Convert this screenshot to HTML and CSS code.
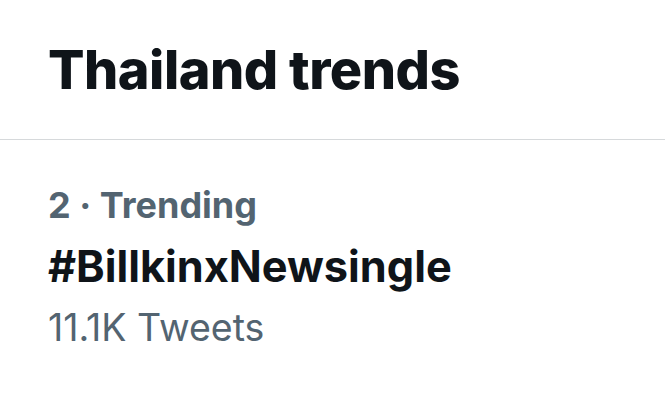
FILE: index.html
```html
<!DOCTYPE html>
<html>
<head>
<meta charset="utf-8">
<link rel="stylesheet" href="styles.css">
</head>
<body>
<div class="panel">
  <header class="header">
    <h1 class="title">Thailand trends</h1>
  </header>
  <div class="trend">
    <div class="meta">2 · Trending</div>
    <div class="tag">#BillkinxNewsingle</div>
    <div class="count">11.1K Tweets</div>
  </div>
</div>
</body>
</html>
```

FILE: styles.css
```css
html, body {
  margin: 0;
  padding: 0;
  background: #ffffff;
}
body {
  font-family: Inter, "Noto Sans", "Liberation Sans", sans-serif;
  width: 665px;
  height: 403px;
  overflow: hidden;
}
.header {
  padding: 37px 48px 0 48px;
  height: 140px;
  box-sizing: border-box;
  border-bottom: 1px solid #d6d9db;
}
.title {
  margin: 0;
  font-size: 54px;
  font-weight: 800;
  line-height: 66px;
  color: #0f1419;
  letter-spacing: -0.5px;
}
.trend {
  padding: 43px 48px 0 48px;
  display: flex;
  flex-direction: column;
}
.meta {
  font-size: 36px;
  font-weight: 700;
  line-height: 44px;
  color: #536471;
}
.tag {
  font-size: 43.3px;
  font-weight: 700;
  line-height: 78px;
  color: #0f1419;
}
.count {
  font-size: 37.5px;
  font-weight: 400;
  line-height: 46px;
  color: #536471;
}
```
